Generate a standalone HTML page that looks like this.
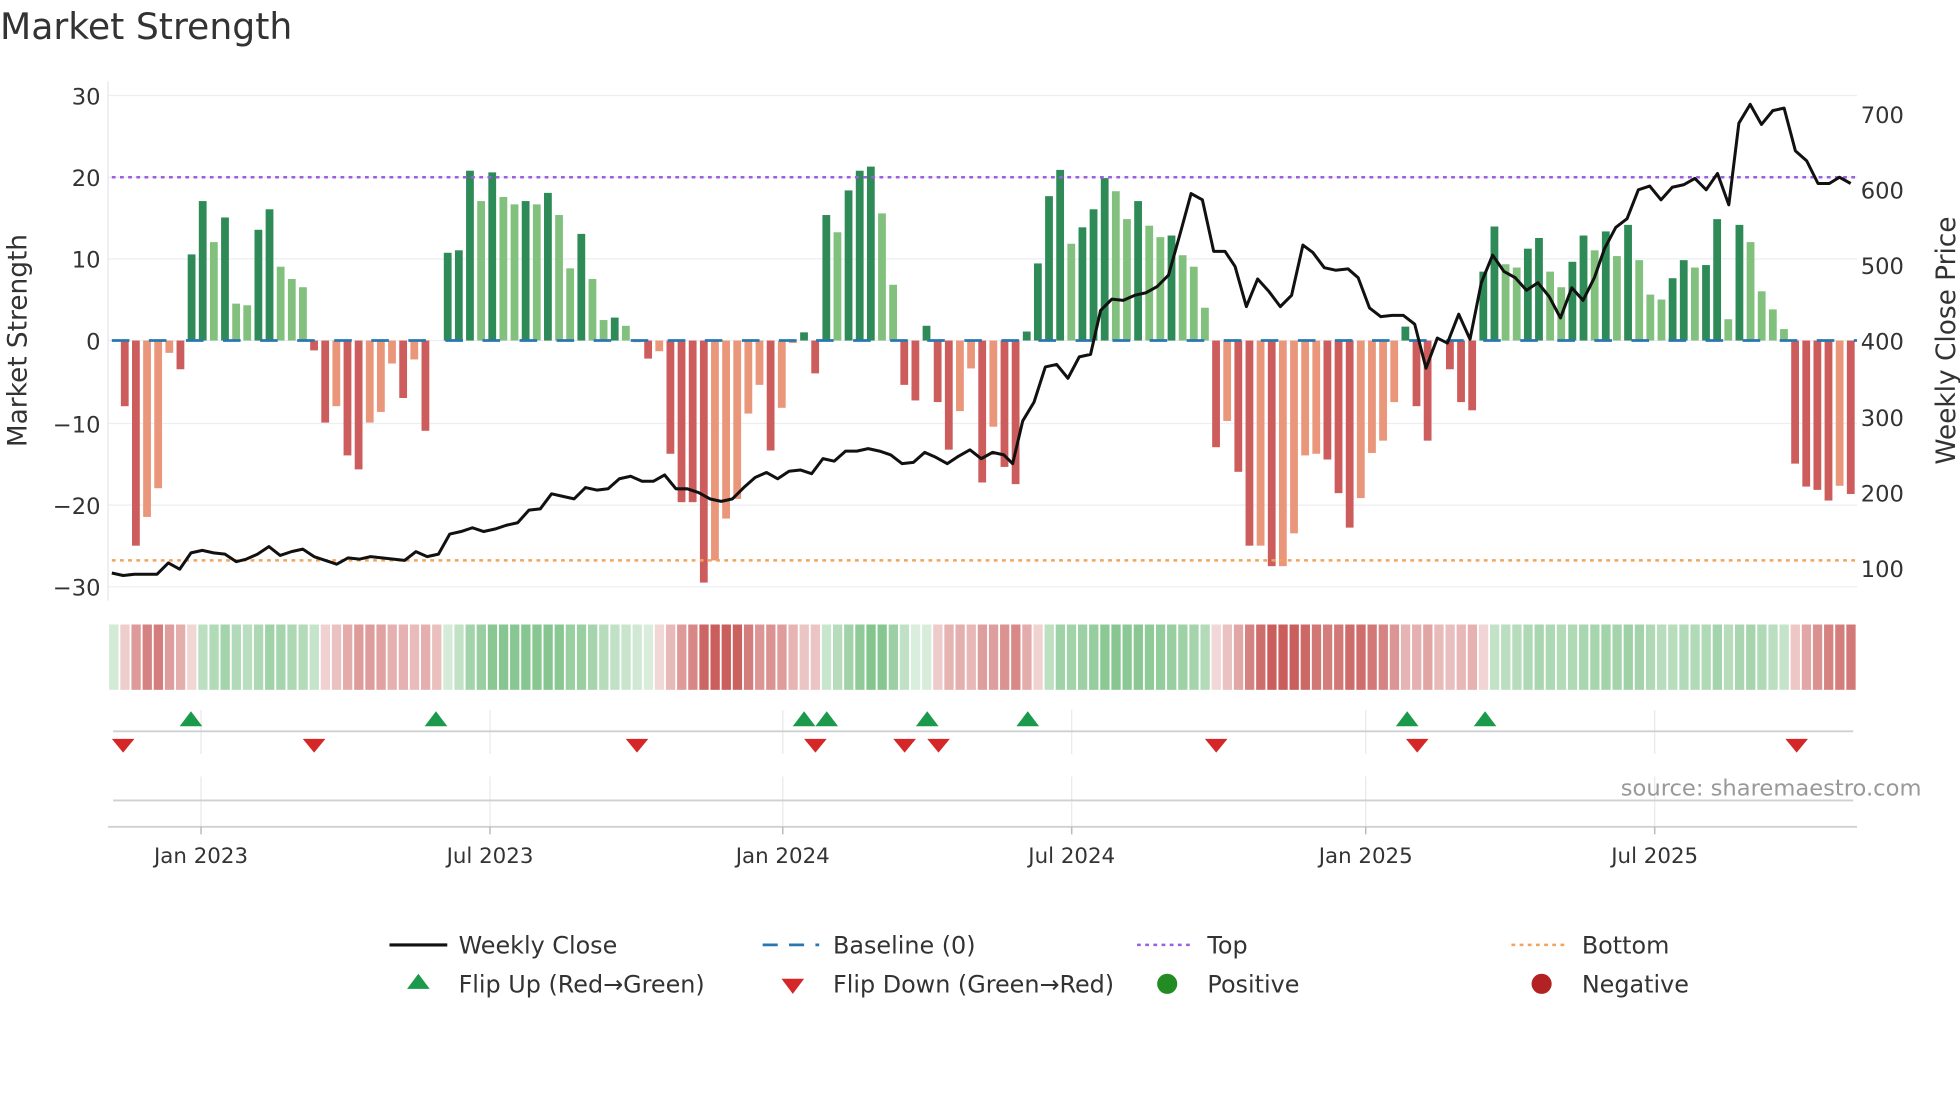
<!DOCTYPE html>
<html><head><meta charset="utf-8"><style>
html,body{margin:0;padding:0;background:#fff;}
svg{display:block;}
text{font-family:"DejaVu Sans","Liberation Sans",sans-serif;fill:#333;}
</style></head><body>
<svg id="s" width="1960" height="1102" viewBox="0 0 1560 877" xmlns="http://www.w3.org/2000/svg">
<rect width="1560" height="877" fill="#fff"/>
<text x="0" y="31" font-size="28.8" fill="#333">Market Strength</text>
<g stroke="#eceef3" stroke-width="1">
<line x1="86" x2="1478" y1="76" y2="76"/><line x1="86" x2="1478" y1="141" y2="141"/>
<line x1="86" x2="1478" y1="206" y2="206"/><line x1="86" x2="1478" y1="271" y2="271"/>
<line x1="86" x2="1478" y1="337" y2="337"/><line x1="86" x2="1478" y1="402" y2="402"/>
<line x1="86" x2="1478" y1="467" y2="467"/>
</g>
<line x1="86" x2="86" y1="65" y2="478" stroke="#e4e6ea" stroke-width="1"/>
<g font-size="18" text-anchor="end">
<text x="80" y="83">30</text><text x="80" y="148">20</text><text x="80" y="213">10</text>
<text x="80" y="278">0</text><text x="80" y="344">−10</text><text x="80" y="409">−20</text><text x="80" y="474">−30</text>
</g>
<g font-size="18">
<text x="1481" y="98">700</text><text x="1481" y="158">600</text><text x="1481" y="218">500</text>
<text x="1481" y="278">400</text><text x="1481" y="339">300</text><text x="1481" y="399">200</text><text x="1481" y="459">100</text>
</g>
<text transform="translate(21,271) rotate(-90)" font-size="21" text-anchor="middle">Market Strength</text>
<text transform="translate(1556,271) rotate(-90)" font-size="21" text-anchor="middle">Weekly Close Price</text>
<g id="bars"></g>
<line x1="89" x2="1478" y1="271" y2="271" stroke="#2a77b0" stroke-width="2.2" stroke-dasharray="14 15.5"/>
<line x1="89" x2="1478" y1="141" y2="141" stroke="#9b5fe0" stroke-width="2" stroke-dasharray="3 3.5"/>
<line x1="89" x2="1478" y1="446" y2="446" stroke="#f2a25a" stroke-width="2" stroke-dasharray="3 3.5"/>
<polyline id="price" fill="none" stroke="#111" stroke-width="2.4" stroke-linejoin="round"/>
<g id="strip"></g>
<g stroke="#e8e9ec" stroke-width="1">
<line x1="160" x2="160" y1="565" y2="600"/><line x1="160" x2="160" y1="618" y2="658"/>
<line x1="390" x2="390" y1="565" y2="600"/><line x1="390" x2="390" y1="618" y2="658"/>
<line x1="623" x2="623" y1="565" y2="600"/><line x1="623" x2="623" y1="618" y2="658"/>
<line x1="853" x2="853" y1="565" y2="600"/><line x1="853" x2="853" y1="618" y2="658"/>
<line x1="1087" x2="1087" y1="565" y2="600"/><line x1="1087" x2="1087" y1="618" y2="658"/>
<line x1="1317" x2="1317" y1="565" y2="600"/><line x1="1317" x2="1317" y1="618" y2="658"/>
</g>
<line x1="90" x2="1475" y1="582" y2="582" stroke="#d0d0d0" stroke-width="1.5"/>
<line x1="90" x2="1475" y1="637" y2="637" stroke="#d0d0d0" stroke-width="1.5"/>
<line x1="86" x2="1478" y1="658" y2="658" stroke="#d0d0d0" stroke-width="1.5"/>
<g stroke="#bbb" stroke-width="1.2">
<line x1="160" x2="160" y1="658" y2="664"/><line x1="390" x2="390" y1="658" y2="664"/>
<line x1="623" x2="623" y1="658" y2="664"/><line x1="853" x2="853" y1="658" y2="664"/>
<line x1="1087" x2="1087" y1="658" y2="664"/><line x1="1317" x2="1317" y1="658" y2="664"/>
</g>
<g id="flips"></g>
<text x="1290" y="633" font-size="18" fill="#999" style="fill:#999">source: sharemaestro.com</text>
<g font-size="17" text-anchor="middle">
<text x="160" y="687">Jan 2023</text><text x="390" y="687">Jul 2023</text><text x="623" y="687">Jan 2024</text>
<text x="853" y="687">Jul 2024</text><text x="1087" y="687">Jan 2025</text><text x="1317" y="687">Jul 2025</text>
</g>
<line x1="310" x2="356" y1="752" y2="752" stroke="#111" stroke-width="2.5"/>
<text x="365" y="759" font-size="19">Weekly Close</text>
<line x1="607" x2="652" y1="752" y2="752" stroke="#2a77b0" stroke-width="2.2" stroke-dasharray="12 9"/>
<text x="663" y="759" font-size="19">Baseline (0)</text>
<line x1="905" x2="948" y1="752" y2="752" stroke="#9b5fe0" stroke-width="2" stroke-dasharray="3 3.5"/>
<text x="961" y="759" font-size="19">Top</text>
<line x1="1203" x2="1246" y1="752" y2="752" stroke="#f2a25a" stroke-width="2" stroke-dasharray="3 3.5"/>
<text x="1259" y="759" font-size="19">Bottom</text>
<polygon points="333,775 342,787 324,787" fill="#1a9a4a"/>
<text x="365" y="790" font-size="19">Flip Up (Red→Green)</text>
<polygon points="622,779 640,779 631,791" fill="#d62728"/>
<text x="663" y="790" font-size="19">Flip Down (Green→Red)</text>
<circle cx="929" cy="783" r="8" fill="#228b22"/>
<text x="961" y="790" font-size="19">Positive</text>
<circle cx="1227" cy="783" r="8" fill="#b22222"/>
<text x="1259" y="790" font-size="19">Negative</text>
</svg>
<script>
var V=[-8,-25,-21.5,-18,-1.5,-3.5,10.5,17,12,15,4.5,4.3,13.5,16,9,7.5,6.5,-1.2,-10,-8,-14,-15.7,-10,-8.7,-2.8,-7,-2.3,-11,0,10.7,11,20.7,17,20.5,17.5,16.6,17,16.6,18,15.3,8.8,13,7.5,2.5,2.8,1.8,-0.2,-2.2,-1.3,-13.8,-19.7,-19.7,-29.5,-26.8,-21.7,-19.3,-8.9,-5.4,-13.4,-8.2,-0.3,1,-4,15.3,13.2,18.3,20.7,21.2,15.5,6.8,-5.4,-7.3,1.8,-7.5,-13.3,-8.6,-3.4,-17.3,
-10.5,-15.4,-17.5,1.1,9.4,17.6,20.8,11.8,13.8,16,19.8,18.2,14.8,17,14,12.6,12.8,10.4,9,4,-13,-9.8,-16,-25,-25,-27.5,-27.5,-23.5,-14,-13.8,-14.5,-18.6,-22.8,-19.2,-13.7,-12.2,-7.5,1.7,-8,-12.2,0,-3.5,-7.5,-8.5,8.4,13.9,9.3,8.9,11.2,12.5,8.4,6.5,9.6,12.8,11,13.3,10.3,14.1,9.8,5.6,5,7.6,9.8,8.9,9.2,14.8,2.6,14.1,12,6,3.8,1.4,-15,-17.8,-18.2,-19.5,-17.7,-18.7];
var T="DDLLLDDDLDLLDDLLLDDLDDLLLDLDLDDDLDLLDLDLLDLLDLLDLDDDDLLLLLDLLDDDLDDDLLDDDDDLLD"+"LDDDDDDLDDDLLDLLDLLLDLDDLDLLLLDDDLLLLDDDLDDDDDLLDDLLDDLDLDLLLDDLDDLDLLLLDDDDLD";
var bars=document.getElementById('bars'),h="";
for(var i=0;i<V.length;i++){var x=99.3+8.863*i,v=V[i],y0=271,y1=271-v*6.53;
var c=v>=0?(T[i]=='D'?'#2e8b57':'#82c07e'):(T[i]=='D'?'#cd5c5c':'#e9967a');
if(Math.abs(v)<0.05)continue;
h+='<rect x="'+(x-3.1)+'" y="'+Math.min(y0,y1)+'" width="6.2" height="'+Math.abs(y1-y0)+'" fill="'+c+'"/>';}
bars.innerHTML=h;
var L=[[89,456],[98,458],[107,457],[116,457],[125,457],[134,448],[143,453],[152,440],[161,438],[170,440],[179,441],[188,447],[196,445],[205,441],[214,435],[223,442],[232,439],[241,437],[250,443],[259,446],[268,449],[277,444],[286,445],[295,443],[304,444],[313,445],[322,446],[331,439],[340,443],[349,441],[358,425],[367,423],[376,420],[385,423],[394,421],[403,418],[412,416],[421,406],[430,405],[439,393],[448,395],[457,397],[466,388],[475,390],[484,389],[493,381],[502,379],[511,383],[520,383],[529,378],[538,389],[547,389],[556,392],[565,397],[574,399],[583,397],[592,388],[601,380],[610,376],[619,381],[628,375],[637,374],[646,377],[655,365],[664,367],[673,359],[682,359],[691,357],[700,359],[709,362],[718,369],[727,368],[736,360],[745,364],[754,369],[763,363],[772,358],[781,365],[790,360],[799,362],[806,369],
[814,335],[823,320],[832,292],[841,290],[850,301],[859,284],[868,282],[876,247],[885,238],[894,239],[903,235],[912,233],[921,228],[930,219],[939,187],[948,154],[957,159],[966,200],[975,200],[983,212],[992,244],[1001,222],[1010,232],[1019,244],[1028,235],[1037,195],[1045,201],[1054,213],[1063,215],[1073,214],[1081,221],[1090,245],[1099,252],[1108,251],[1117,251],[1126,258],[1135,293],[1144,269],[1152,273],[1161,250],[1170,270],[1179,225],[1188,203],[1197,216],[1206,221],[1215,231],[1224,225],[1233,236],[1242,253],[1251,229],[1260,239],[1269,221],[1277,198],[1286,181],[1295,174],[1304,151],[1313,148],[1322,159],[1331,149],[1340,147],[1349,142],[1358,151],[1367,138],[1376,163],[1384,98],[1393,83],[1402,99],[1411,88],[1420,86],[1429,120],[1438,128],[1447,146],[1456,146],[1464,141],[1473,146]];
document.getElementById('price').setAttribute('points',L.map(function(p){return p[0]+','+p[1]}).join(' '));
function mix(a,b,t){return 'rgb('+a.map(function(v,k){return Math.round(v+(b[k]-v)*t)}).join(',')+')';}
var s="",e=2,W=[255,255,255],G=[98,180,110],R=[196,80,78];
for(var j=0;j<157;j++){var v=j==0?2:V[Math.min(j-1,155)];e=e*0.6+v*0.4;
var t=Math.min(1,Math.abs(e)/22),c=mix(W,e>=0?G:R,0.22+0.7*t);
s+='<rect x="'+(86.9+8.863*j)+'" y="497" width="7.4" height="52" fill="'+c+'"/>';}
document.getElementById('strip').innerHTML=s;
var f="";[152,347,640,658,738,818,1120,1182].forEach(function(x){f+='<polygon points="'+x+',566 '+(x+9)+',578 '+(x-9)+',578" fill="#1a9a4a"/>';});
[98,250,507,649,720,747,968,1128,1430].forEach(function(x){f+='<polygon points="'+(x-9)+',588 '+(x+9)+',588 '+x+',599" fill="#d62728"/>';});
document.getElementById('flips').innerHTML=f;
</script>
</body></html>
